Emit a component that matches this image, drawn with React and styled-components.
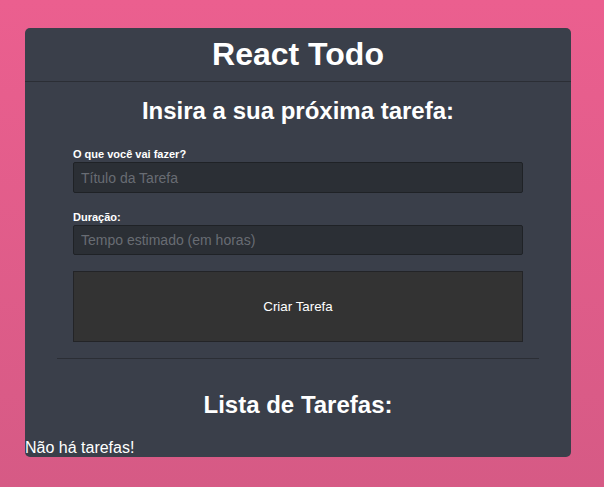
import React from "react";
import styled, { createGlobalStyle } from "styled-components";

const GlobalStyle = createGlobalStyle`
  html, body {
    margin: 0;
    padding: 0;
    min-height: 100%;
  }
  body {
    min-height: 487px;
    background: linear-gradient(180deg, #eb5f8f 0%, #d65a85 100%);
    font-family: "Liberation Sans", Arial, sans-serif;
    color: #ffffff;
  }
  * { box-sizing: border-box; }
`;

const Page = styled.div`
  padding: 28px 0 30px 25px;
`;

const Card = styled.main`
  width: 546px;
  background: #3a3f4a;
  border-radius: 5px;
  display: flex;
  flex-direction: column;
`;

const Header = styled.header`
  padding: 8px 0;
  border-bottom: 1px solid #2b2e35;
`;

const Title = styled.h1`
  margin: 0;
  font-size: 32px;
  font-weight: 700;
  text-align: center;
  line-height: normal;
`;

const SectionTitle = styled.h2`
  margin: ${(p) => p.$margin};
  font-size: 24px;
  font-weight: 700;
  text-align: center;
  line-height: normal;
`;

const Form = styled.form`
  display: flex;
  flex-direction: column;
  padding: 0 48px;
`;

const Field = styled.div`
  display: flex;
  flex-direction: column;
  gap: 2px;
  margin-bottom: ${(p) => p.$gap || 0}px;
`;

const Label = styled.label`
  font-size: 11px;
  font-weight: 700;
  line-height: normal;
`;

const Input = styled.input`
  height: ${(p) => p.$h}px;
  width: 100%;
  background: #2b2f35;
  border: 1px solid #1f2226;
  border-radius: 2px;
  padding: 0 7px;
  font-family: "Liberation Sans", Arial, sans-serif;
  font-size: 14px;
  color: #ffffff;
  outline: none;
  &::placeholder {
    color: #686c73;
  }
`;

const Button = styled.button`
  height: 71px;
  width: 100%;
  background: #333333;
  border: 1px solid #232427;
  color: #ffffff;
  font-family: "Liberation Sans", Arial, sans-serif;
  font-size: 13.33px;
  cursor: pointer;
`;

const Divider = styled.hr`
  margin: 16px 32px 0;
  border: none;
  border-top: 1px solid #2b2e35;
  height: 0;
`;

const Empty = styled.p`
  margin: 0;
  font-size: 16px;
  line-height: normal;
`;

export default function App() {
  return (
    <>
      <GlobalStyle />
      <Page>
        <Card>
          <Header>
            <Title>React Todo</Title>
          </Header>
          <SectionTitle $margin="15px 0 23px">Insira a sua próxima tarefa:</SectionTitle>
          <Form onSubmit={(e) => e.preventDefault()}>
            <Field $gap={18}>
              <Label htmlFor="title">O que você vai fazer?</Label>
              <Input id="title" $h={31} placeholder="Título da Tarefa" />
            </Field>
            <Field $gap={16}>
              <Label htmlFor="duration">Duração:</Label>
              <Input id="duration" $h={30} placeholder="Tempo estimado (em horas)" />
            </Field>
            <Button type="submit">Criar Tarefa</Button>
          </Form>
          <Divider />
          <SectionTitle $margin="32px 0 20px">Lista de Tarefas:</SectionTitle>
          <Empty>Não há tarefas!</Empty>
        </Card>
      </Page>
    </>
  );
}
